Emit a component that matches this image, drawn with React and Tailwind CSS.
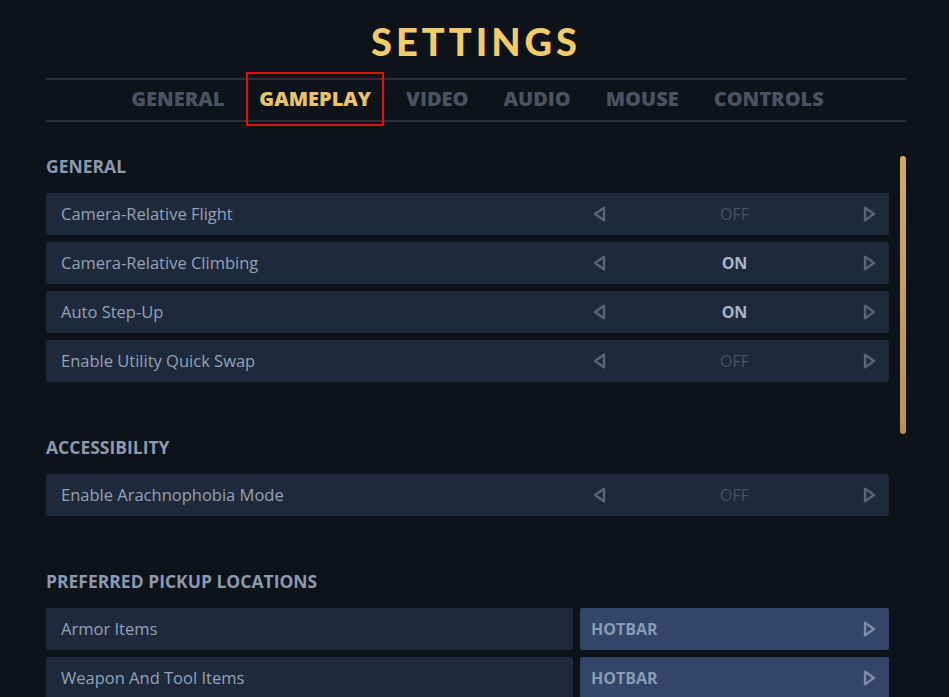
import { useState } from 'react';

const tabs = ['GENERAL', 'GAMEPLAY', 'VIDEO', 'AUDIO', 'MOUSE', 'CONTROLS'];

const sections = [
    {
        title: 'GENERAL',
        rows: [
            { label: 'Camera-Relative Flight', value: false },
            { label: 'Camera-Relative Climbing', value: true },
            { label: 'Auto Step-Up', value: true },
            { label: 'Enable Utility Quick Swap', value: false },
        ],
    },
    {
        title: 'ACCESSIBILITY',
        rows: [{ label: 'Enable Arachnophobia Mode', value: false }],
    },
];

const pickups = ['Armor Items', 'Weapon And Tool Items'];

const Arrow = ({ dir, color = '#5a6579' }) => (
    <svg width="13" height="16" viewBox="0 0 13 16" className="shrink-0">
        {dir === 'left' ? (
            <path d="M11 1.8 L2 8 L11 14.2 Z" fill="none" stroke={color} strokeWidth="2.4" strokeLinejoin="round" />
        ) : (
            <path d="M2 1.8 L11 8 L2 14.2 Z" fill="none" stroke={color} strokeWidth="2.4" strokeLinejoin="round" />
        )}
    </svg>
);

const ToggleRow = ({ label, value }) => (
    <div className="flex items-center h-[42px] bg-[#1e293b] rounded-[2px] pl-[15px] pr-[13px]">
        <span className="flex-1 text-[16.5px] text-[#94a3b8]">{label}</span>
        <div className="flex items-center w-[283px]">
            <Arrow dir="left" />
            <span className={`flex-1 text-center text-[16px] ${value ? 'font-bold text-[#a9b7cb]' : 'text-[#475263]'}`}>{value ? 'ON' : 'OFF'}</span>
            <Arrow dir="right" />
        </div>
    </div>
);

const SectionTitle = ({ children }) => (
    <h2 className="text-[17.5px] font-bold text-[#8a9ab0] leading-[20px] mb-[17px]">{children}</h2>
);

const App = () => {
    const [active, setActive] = useState('GAMEPLAY');

    return (
        <div className="h-[697px] overflow-hidden bg-[#0e1219] font-['Open_Sans',sans-serif]">
            <div className="w-[860px] ml-[46px] pt-[21px]">
                <h1 className="text-center font-['Lato',sans-serif] font-black text-[38px] leading-[40px] tracking-[4px] text-[#f2cb6b]">SETTINGS</h1>
                <div className="mt-[17px] border-t-2 border-b-2 border-[#2a2f38] h-[44px] pb-[3px] flex items-center justify-center gap-[9px] pl-[3px]">
                    {tabs.map(tab => (
                        <button
                            key={tab}
                            onClick={() => setActive(tab)}
                            className={`relative px-[13px] text-[20px] font-extrabold leading-[24px] ${active === tab ? 'text-[#e9c46b]' : 'text-[#4a5361]'}`}
                        >
                            {tab}
                            {active === tab && <span className="absolute left-0 right-0 -top-[15px] -bottom-[15px] border-2 border-[#e01010]"></span>}
                        </button>
                    ))}
                </div>
                <div className="flex mt-[34px]">
                    <div className="w-[843px]">
                        {sections.map((s, i) => (
                            <div key={s.title} className={i > 0 ? 'mt-[55px]' : ''}>
                                <SectionTitle>{s.title}</SectionTitle>
                                <div className="flex flex-col gap-[7px]">
                                    {s.rows.map(r => <ToggleRow key={r.label} {...r} />)}
                                </div>
                            </div>
                        ))}
                        <div className="mt-[55px]">
                            <SectionTitle>PREFERRED PICKUP LOCATIONS</SectionTitle>
                            <div className="flex flex-col gap-[7px]">
                                {pickups.map(p => (
                                    <div key={p} className="flex gap-[7px] h-[42px]">
                                        <div className="flex-1 flex items-center bg-[#1e293b] rounded-[2px] pl-[15px] text-[16.5px] text-[#94a3b8]">{p}</div>
                                        <div className="w-[309px] flex items-center bg-[#334568] rounded-[2px] pl-[11px] pr-[13px]">
                                            <span className="flex-1 text-[16px] font-bold text-[#8a9bb4]">HOTBAR</span>
                                            <Arrow dir="right" color="#7d8ea8" />
                                        </div>
                                    </div>
                                ))}
                            </div>
                        </div>
                    </div>
                    <div className="ml-[11px] mt-[0px] w-[6px] h-[278px] rounded-full bg-gradient-to-b from-[#d3a968] to-[#bb9050]"></div>
                </div>
            </div>
        </div>
    );
};

export default App;
